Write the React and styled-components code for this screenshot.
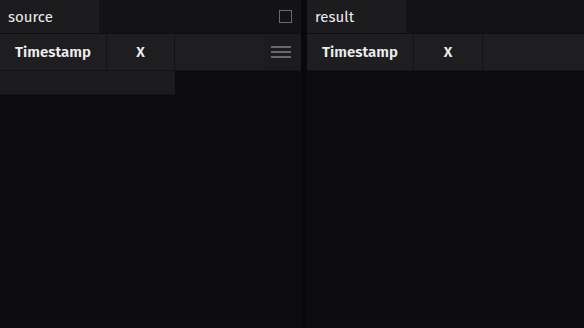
import React from 'react'
import styled, { createGlobalStyle } from 'styled-components'

const Global = createGlobalStyle`
html,body{margin:0;padding:0;background:#0c0b0f;}
*{box-sizing:border-box;}
`

const Page = styled.div`
display:flex;
width:584px;
height:328px;
background:#0c0b0f;
font-family:"Fira Sans","Noto Sans","Open Sans",sans-serif;
color:#ededed;
overflow:hidden;
`

const Pane = styled.div`
display:flex;
flex-direction:column;
width:${({w})=>w ? w+'px' : 'auto'};
flex:${({w})=>w ? 'none' : '1'};
min-width:0;
`

const Splitter = styled.div`
width:6px;
flex:none;
background:#09080b;
`

const TabBar = styled.div`
display:flex;
align-items:center;
height:34px;
background:#131215;
border-bottom:1px solid #0e0d10;
`

const Tab = styled.div`
width:99px;
height:100%;
display:flex;
align-items:center;
padding-left:8px;
background:#1c1b1e;
font-size:15px;
`

const Spacer = styled.div`
flex:1;
`

const Check = styled.div`
width:13px;
height:13px;
border:1.5px solid #6b6a6e;
margin-right:9px;
`

const HeaderRow = styled.div`
display:flex;
height:37px;
background:#1e1d20;
border-bottom:1px solid #141316;
`

const Cell = styled.div`
width:${({w})=>w}px;
flex:none;
display:flex;
align-items:center;
justify-content:center;
border-right:1px solid #131215;
font-size:15px;
font-weight:600;
`

const Filler = styled.div`
flex:1;
`

const MenuCell = styled.div`
width:37px;
flex:none;
display:flex;
align-items:center;
justify-content:center;
padding-right:4px;
background:#1c1b1e;
`

const DataRow = styled.div`
width:175px;
height:24px;
background:#1c1b1e;
border-bottom:1px solid #141316;
`

const Menu = () => (
  <svg width="20" height="12" viewBox="0 0 20 12">
    <g stroke="#8a898d" strokeWidth="1.4">
      <line x1="0" y1="1" x2="20" y2="1" />
      <line x1="0" y1="6" x2="20" y2="6" />
      <line x1="0" y1="11" x2="20" y2="11" />
    </g>
  </svg>
)

export default function App() {
  return (
    <>
      <Global />
      <Page>
        <Pane w={301}>
          <TabBar>
            <Tab>source</Tab>
            <Spacer />
            <Check />
          </TabBar>
          <HeaderRow>
            <Cell w={107}>Timestamp</Cell>
            <Cell w={68}>X</Cell>
            <Filler />
            <MenuCell><Menu /></MenuCell>
          </HeaderRow>
          <DataRow />
        </Pane>
        <Splitter />
        <Pane>
          <TabBar>
            <Tab>result</Tab>
            <Spacer />
          </TabBar>
          <HeaderRow>
            <Cell w={107}>Timestamp</Cell>
            <Cell w={69}>X</Cell>
            <Filler />
          </HeaderRow>
        </Pane>
      </Page>
    </>
  )
}
